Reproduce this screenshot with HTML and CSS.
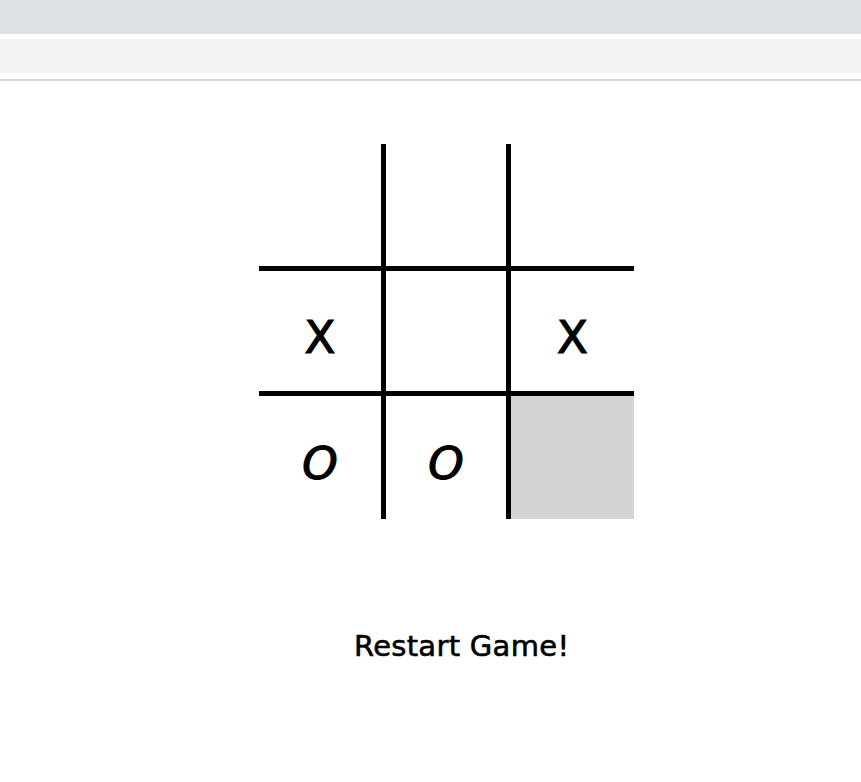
FILE: index.html
```html
<!DOCTYPE html>
<html lang="en">
<head>
<meta charset="utf-8">
<title>Tic Tac Toe</title>
<link rel="stylesheet" href="styles.css">
</head>
<body>
<header class="chrome">
  <div class="tabstrip"></div>
  <div class="toolbar"></div>
  <div class="divider"></div>
</header>
<main class="game">
  <div class="board">
    <div class="cell"></div>
    <div class="cell"></div>
    <div class="cell"></div>
    <div class="cell">X</div>
    <div class="cell"></div>
    <div class="cell">X</div>
    <div class="cell o">O</div>
    <div class="cell o">O</div>
    <div class="cell active"></div>
  </div>
  <button class="restart" type="button">Restart Game!</button>
</main>
</body>
</html>
```

FILE: styles.css
```css
html, body {
  margin: 0;
  padding: 0;
  background: #ffffff;
}

body {
  font-family: "Comic Sans MS", "DejaVu Sans", sans-serif;
  color: #000000;
}

.chrome {
  display: flex;
  flex-direction: column;
}

.tabstrip {
  height: 34px;
  background: #dee1e6;
}

.toolbar {
  height: 34px;
  margin-top: 5px;
  background: #f1f2f4;
}

.divider {
  height: 2px;
  margin-top: 6px;
  background: #d8d9dc;
}

.game {
  display: flex;
  flex-direction: column;
  align-items: flex-start;
  padding-top: 63px;
  padding-left: 259px;
}

.board {
  display: grid;
  grid-template-columns: 122px 120px 123px;
  grid-template-rows: 122px 120px 123px;
  gap: 5px;
  background: #000000;
}

.cell {
  display: flex;
  align-items: center;
  justify-content: center;
  padding-top: 12px;
  box-sizing: border-box;
  background: #ffffff;
  font-size: 45px;
  line-height: 1;
  -webkit-text-stroke: 1.2px #000000;
}

.cell.o {
  font-style: italic;
}

.cell.active {
  background: #d3d3d3;
}

.restart {
  margin-top: 110px;
  margin-left: 95px;
  padding: 0;
  border: none;
  background: none;
  font-family: "Comic Sans MS", "DejaVu Sans", sans-serif;
  font-size: 29px;
  letter-spacing: 0.3px;
  -webkit-text-stroke: 0.6px #000000;
  color: #000000;
  cursor: pointer;
}
```
